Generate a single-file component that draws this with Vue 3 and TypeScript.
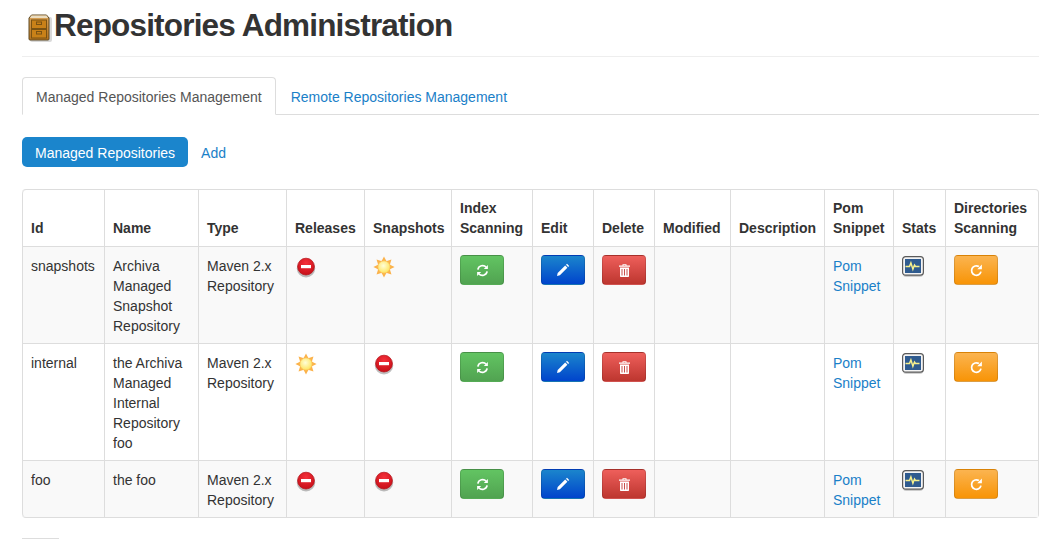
<script setup lang="ts">
type Flag = 'stop' | 'sun'

interface Repo {
  id: string
  name: string[]
  releases: Flag
  snapshots: Flag
}

// column widths include the 1px left border of each cell
const columns = [
  { width: 82, label: 'Id' },
  { width: 94, label: 'Name' },
  { width: 88, label: 'Type' },
  { width: 78, label: 'Releases' },
  { width: 87, label: 'Snapshots' },
  { width: 81, label: 'Index Scanning' },
  { width: 61, label: 'Edit' },
  { width: 61, label: 'Delete' },
  { width: 76, label: 'Modified' },
  { width: 94, label: 'Description' },
  { width: 69, label: 'Pom Snippet' },
  { width: 52, label: 'Stats' },
  { width: 93, label: 'Directories Scanning' },
]

const repos: Repo[] = [
  { id: 'snapshots', name: ['Archiva', 'Managed', 'Snapshot', 'Repository'], releases: 'stop', snapshots: 'sun' },
  { id: 'internal', name: ['the Archiva', 'Managed', 'Internal', 'Repository', 'foo'], releases: 'sun', snapshots: 'stop' },
  { id: 'foo', name: ['the foo'], releases: 'stop', snapshots: 'stop' },
]

const sunRays = [0, 45, 90, 135, 180, 225, 270, 315]
</script>

<template>
  <div class="page">
    <header class="page-header">
      <h1 class="title">
        <svg class="cabinet" width="24" height="28" viewBox="0 0 24 28">
          <defs>
            <linearGradient id="cab" x1="0" y1="0" x2="0" y2="1">
              <stop offset="0" stop-color="#d9a45a" />
              <stop offset="1" stop-color="#b5711a" />
            </linearGradient>
          </defs>
          <rect x="2" y="3" width="22" height="25" rx="2" fill="#000" opacity="0.15" />
          <path d="M3.5 1h15l2.5 3v21a1 1 0 0 1-1 1H2a1 1 0 0 1-1-1V4z" fill="url(#cab)" stroke="#5e4a24" />
          <path d="M3.5 1.6h15l1.6 2.4H1.9z" fill="#eadcc0" />
          <rect x="3.5" y="6" width="15" height="8.5" fill="#c98118" stroke="#7a5212" />
          <rect x="3.5" y="15.5" width="15" height="8.5" fill="#c98118" stroke="#7a5212" />
          <rect x="8.5" y="8" width="5" height="2.5" fill="none" stroke="#7a5212" />
          <rect x="8.5" y="17.5" width="5" height="2.5" fill="none" stroke="#7a5212" />
        </svg>
        <span>Repositories Administration</span>
      </h1>
    </header>

    <nav class="tabs">
      <a class="tab active">Managed Repositories Management</a>
      <a class="tab">Remote Repositories Management</a>
    </nav>

    <div class="pills">
      <a class="pill active">Managed Repositories</a>
      <a class="pill">Add</a>
    </div>

    <table class="repos">
      <colgroup>
        <col v-for="c in columns" :key="c.label" :style="{ width: c.width + 'px' }" />
      </colgroup>
      <thead>
        <tr>
          <th v-for="c in columns" :key="c.label">{{ c.label }}</th>
        </tr>
      </thead>
      <tbody>
        <tr v-for="repo in repos" :key="repo.id">
          <td>{{ repo.id }}</td>
          <td><div v-for="line in repo.name" :key="line">{{ line }}</div></td>
          <td>Maven 2.x Repository</td>
          <td v-for="flag in [repo.releases, repo.snapshots]" :key="flag + repo.id">
            <svg v-if="flag === 'stop'" class="flag" width="22" height="22" viewBox="0 0 22 22">
              <defs>
                <radialGradient id="red" cx="0.5" cy="0.3" r="0.75">
                  <stop offset="0" stop-color="#f5303a" />
                  <stop offset="1" stop-color="#c40d16" />
                </radialGradient>
              </defs>
              <ellipse cx="11" cy="12.4" rx="9.2" ry="9" fill="#000" opacity="0.25" />
              <circle cx="11" cy="10.6" r="8.4" fill="url(#red)" stroke="#b50e16" stroke-width="0.7" />
              <rect x="6" y="9" width="10" height="3.2" fill="#fff" />
            </svg>
            <svg v-else class="flag" width="22" height="22" viewBox="0 0 22 22">
              <defs>
                <radialGradient id="sun" cx="0.45" cy="0.4" r="0.6">
                  <stop offset="0" stop-color="#fffed8" />
                  <stop offset="1" stop-color="#fee45e" />
                </radialGradient>
              </defs>
              <polygon
                v-for="r in sunRays"
                :key="r"
                points="8.4,5.5 11,0.4 13.600,5.500"
                fill="#fbb24a"
                :transform="`rotate(${r} 11 11)`"
              />
              <circle cx="11" cy="11" r="6.200" fill="url(#sun)" stroke="#fbb850" stroke-width="0.7" />
            </svg>
          </td>
          <td>
            <a class="btn green">
              <svg width="13" height="13" viewBox="0 0 14 14">
                <path d="M2 6A5.100 5.100 0 0 1 11 3.600" fill="none" stroke="#fff" stroke-width="1.800" />
                <path d="M12.800 1v4.400H8.400z" fill="#fff" />
                <path d="M12 8A5.100 5.100 0 0 1 3 10.400" fill="none" stroke="#fff" stroke-width="1.800" />
                <path d="M1.200 13V8.600h4.400z" fill="#fff" />
              </svg>
            </a>
          </td>
          <td>
            <a class="btn blue">
              <svg width="14" height="14" viewBox="0 0 14 14">
                <path d="M1 13l0.700-2.900 7.500-7.500 2.200 2.200-7.500 7.500z" fill="#fff" />
                <path d="M10 1.800l1-1 2.200 2.200-1 1z" fill="#fff" />
              </svg>
            </a>
          </td>
          <td>
            <a class="btn red">
              <svg width="11" height="13" viewBox="0 0 11 13">
                <path d="M0 1.600h11v1.200H0zM3.500 0.200h4v1.400h-1V1H4.500v0.600h-1z" fill="#fff" />
                <path d="M1 3.500h9v8.700a.8.8 0 0 1-.8.8H1.800a.8.8 0 0 1-.8-.8z" fill="#fff" />
                <path d="M3 5v6.500M5.500 5v6.500M8 5v6.500" stroke="#c9504c" stroke-width="1" />
              </svg>
            </a>
          </td>
          <td></td>
          <td></td>
          <td><a class="link">Pom Snippet</a></td>
          <td>
            <svg class="flag" width="22" height="22" viewBox="0 0 22 22">
              <rect x="1" y="2" width="20" height="19" rx="3" fill="#000" opacity="0.18" />
              <rect x="0.600" y="0.600" width="20.800" height="18.600" rx="3" fill="#f4f4f4" stroke="#5a5a5a" stroke-width="1.200" />
              <rect x="3" y="3" width="16" height="14" fill="#2f5b8f" />
              <path d="M3.500 10.500h4l1.400-3.600 2 6.400 1.600-4.200 1 1.400h4" fill="none" stroke="#f7f08c" stroke-width="1.500" />
            </svg>
          </td>
          <td>
            <a class="btn orange">
              <svg width="13" height="13" viewBox="0 0 14 14">
                <path d="M11.800 8.200A5.100 5.100 0 1 1 9.600 2.800" fill="none" stroke="#fff" stroke-width="1.900" />
                <path d="M12.800 0.600v5H7.800z" fill="#fff" />
              </svg>
            </a>
          </td>
        </tr>
      </tbody>
    </table>

    <div class="foot-rule"></div>
  </div>
</template>

<style>
html,
body {
  margin: 0;
  overflow: hidden;
  background: #fff;
}
</style>

<style scoped>
.page {
  height: 539px;
  box-sizing: border-box;
  padding: 5px 16px 0 22px;
  font: 14px/20px 'Liberation Sans', Arial, sans-serif;
  color: #333;
  overflow: hidden;
}
.page-header {
  padding-bottom: 11px;
  border-bottom: 1px solid #eee;
  margin-bottom: 20px;
}
.title {
  display: flex;
  align-items: center;
  gap: 2px;
  margin: 0;
  font-size: 31.5px;
  line-height: 40px;
  font-weight: 700;
  letter-spacing: -0.82px;
}
.cabinet {
  flex: none;
  margin: 6px 0 0 6px;
}
.tabs {
  display: flex;
  height: 37px;
  border-bottom: 1px solid #ddd;
  margin-bottom: 22px;
}
.tab {
  padding: 9px 13px 8px;
  margin-right: 1px;
  border: 1px solid transparent;
  border-radius: 4px 4px 0 0;
  color: #1a80c8;
  height: 38px;
  box-sizing: border-box;
}
.tab.active {
  border-color: #ddd #ddd #fff;
  background: #fff;
  color: #555;
}
.pills {
  display: flex;
  align-items: center;
  gap: 1px;
  margin-bottom: 22px;
}
.pill {
  padding: 6px 13px 4px 12px;
  border-radius: 5px;
  color: #1a80c8;
}
.pill.active {
  padding-left: 13px;
  background: #1b85cc;
  color: #fff;
}
.repos {
  width: 1017px;
  table-layout: fixed;
  border-collapse: separate;
  border-spacing: 0;
  border: 1px solid #ddd;
  border-left: 0;
  border-radius: 4px;
}
.repos th,
.repos td {
  padding: 9px 8px 7px;
  border-left: 1px solid #ddd;
  border-top: 1px solid #ddd;
  text-align: left;
  vertical-align: top;
}
.repos th {
  padding: 8px;
  border-top: 0;
  vertical-align: bottom;
  font-weight: 700;
}
.repos tbody tr:nth-child(odd) td {
  background: #f9f9f9;
}
.repos tr:first-child th:first-child {
  border-top-left-radius: 4px;
}
.repos tr:last-child td:first-child {
  border-bottom-left-radius: 4px;
}
.flag {
  display: block;
}
.btn {
  display: flex;
  align-items: center;
  justify-content: center;
  width: 44px;
  height: 30px;
  margin-top: -1px;
  box-sizing: border-box;
  border-radius: 4px;
  border: 1px solid rgba(0, 0, 0, 0.12);
}
.green {
  background: linear-gradient(#62c462, #51a351);
}
.blue {
  background: linear-gradient(#1b85cc, #0044cc);
}
.red {
  background: linear-gradient(#ee5f5b, #bd362f);
}
.orange {
  background: linear-gradient(#fbb450, #f89406);
}
.link {
  color: #1a80c8;
}
.foot-rule {
  width: 37px;
  border-top: 1px solid #ddd;
  margin-top: 20px;
}
</style>
